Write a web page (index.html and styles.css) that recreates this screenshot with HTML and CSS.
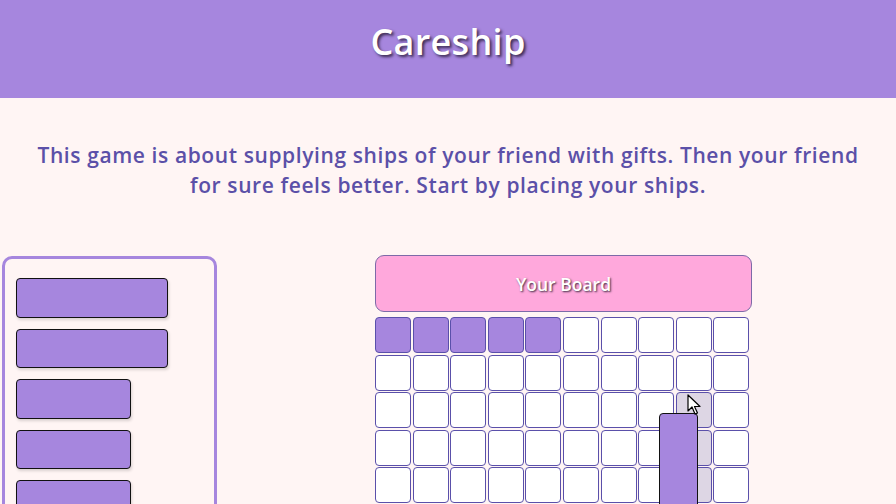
FILE: index.html
```html
<!DOCTYPE html>
<html>
<head>
<meta charset="utf-8">
<link rel="stylesheet" href="styles.css">
</head>
<body>
<header class="top">
  <h1 class="title">Careship</h1>
</header>
<main class="main">
  <p class="intro">This game is about supplying ships of your friend with gifts. Then your friend for sure feels better. Start by placing your ships.</p>
  <div class="play">
    <div class="dock">
      <div class="ship ship-long"></div>
      <div class="ship ship-long"></div>
      <div class="ship ship-mid"></div>
      <div class="ship ship-mid"></div>
      <div class="ship ship-mid"></div>
    </div>
    <div class="board">
      <div class="board-head">Your Board</div>
      <div class="grid" id="grid"></div>
      <div class="drag-ship"></div>
      <svg class="cursor" width="14" height="22" viewBox="0 0 14 22"><path d="M1 1 L1 17 L5 13 L8 20 L10.5 19 L7.5 12.5 L13 12.5 Z" fill="#fff" stroke="#000" stroke-width="1.2" stroke-linejoin="round"/></svg>
    </div>
  </div>
</main>
<script src="app.js"></script>
</body>
</html>
```

FILE: app.js
```js
const grid = document.getElementById('grid');
for (let r = 0; r < 5; r++) {
  for (let c = 0; c < 10; c++) {
    const d = document.createElement('div');
    d.className = 'cell';
    if (r === 0 && c < 5) d.classList.add('taken');
    if (c === 8 && r >= 2) d.classList.add('hover');
    grid.appendChild(d);
  }
}
```

FILE: styles.css
```css
* { box-sizing: border-box; }
html, body { margin: 0; padding: 0; }
body {
  background: #fff5f4;
  font-family: "Open Sans", "Noto Sans", sans-serif;
  width: 896px;
  height: 504px;
  overflow: hidden;
}
.top {
  height: 98px;
  background: #a686de;
  display: flex;
  align-items: center;
  justify-content: center;
}
.title {
  margin: 0;
  color: #fff;
  font-size: 36px;
  font-weight: 600;
  letter-spacing: 0.3px;
  text-shadow: 2px 2px 3px #3a2a50;
  margin-top: -15px;
}
.intro {
  margin: 42px auto 0;
  width: 850px;
  text-align: center;
  color: #5b50a8;
  font-size: 21px;
  line-height: 30px;
  font-weight: 600;
  letter-spacing: 0.6px;
}
.play {
  display: flex;
  margin-top: 55px;
  padding-left: 2px;
  gap: 158px;
}
.dock {
  width: 215px;
  height: 260px;
  border: 3px solid #a686de;
  border-radius: 10px;
  padding: 19px 0 0 11px;
  display: flex;
  flex-direction: column;
  align-items: flex-start;
  gap: 11px;
  margin-top: 1px;
}
.ship {
  background: #a686de;
  border: 1px solid #111;
  border-radius: 4px;
  height: 39.5px;
  box-shadow: 1px 2px 3px rgba(0,0,0,0.15);
  flex-shrink: 0;
}
.ship-long { width: 152px; }
.ship-mid { width: 115px; }
.board {
  position: relative;
  width: 377px;
}
.board-head {
  height: 57px;
  background: #ffa8dc;
  border: 1px solid #7d6aa8;
  border-radius: 9px;
  display: flex;
  align-items: center;
  justify-content: center;
  color: #fff;
  font-size: 17.5px;
  font-weight: 600;
  text-shadow: 1px 1px 2px #3a2a40;
}
.grid {
  margin-top: 5px;
  display: grid;
  grid-template-columns: repeat(10, 36px);
  grid-auto-rows: 36px;
  gap: 1.6px;
}
.cell {
  background: #fff;
  border: 1px solid #5a50aa;
  border-radius: 4px;
}
.cell.taken { background: #a686de; }
.cell.hover { background: #ddd6e4; }
.drag-ship {
  position: absolute;
  left: 284px;
  top: 158px;
  width: 39px;
  height: 120px;
  background: #a686de;
  border: 1px solid #111;
  border-radius: 4px;
}
.cursor {
  position: absolute;
  left: 312px;
  top: 139px;
}
```
